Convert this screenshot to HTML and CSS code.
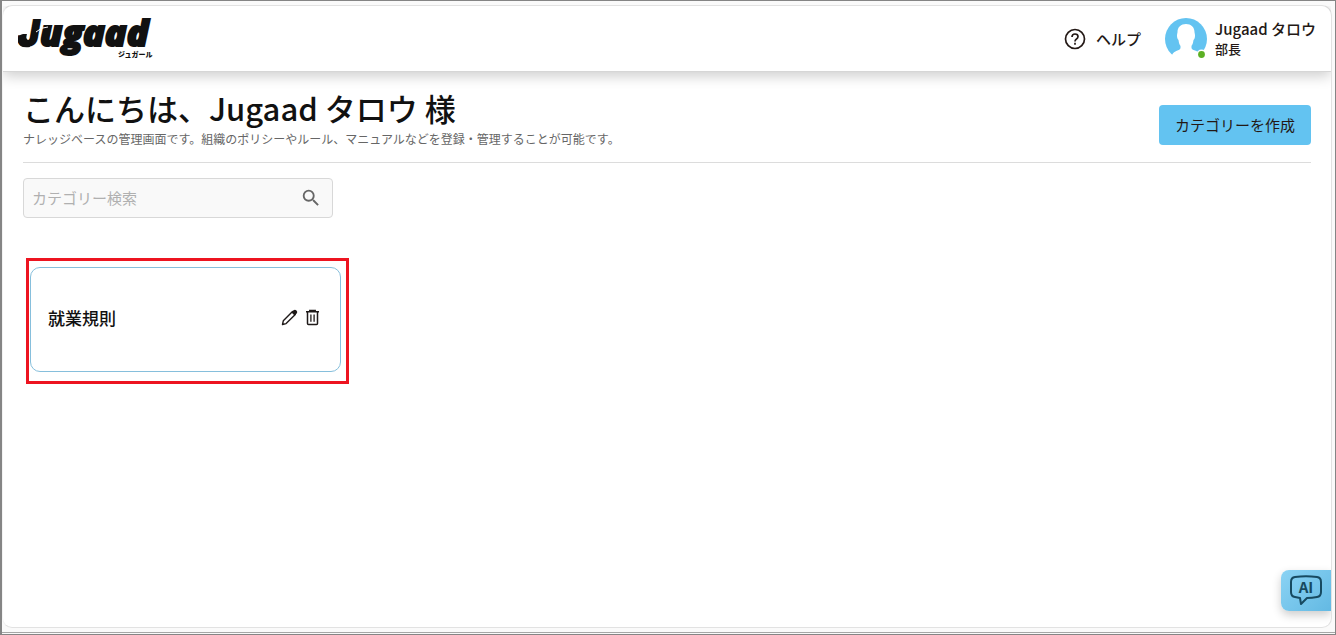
FILE: index.html
```html
<!DOCTYPE html>
<html lang="ja">
<head>
<meta charset="utf-8">
<meta name="viewport" content="width=device-width, initial-scale=1">
<title>Jugaad</title>
<link rel="stylesheet" href="styles.css">
</head>
<body>
<div class="app">
  <header class="topbar">
    <a class="brand" href="#" aria-label="Jugaad ジュガール">
      <svg class="brand-logo" width="140" height="56" viewBox="0 0 140 56">
        <text class="brand-word" x="0" y="35"><tspan class="brand-initial">J</tspan><tspan x="22">ugaad</tspan></text>
        <path d="M0 29Q0 24 5 23L9 23Q7 27 10 29L12 36Q1 38 0 29Z"/>
        <path d="M18 21Q23 16 30 16" fill="none" stroke="#fff" stroke-width="1"/>
        <text class="brand-kana" x="100" y="46">ジュガール</text>
      </svg>
    </a>
    <nav class="topbar-actions">
      <a class="help" href="#">
        <svg width="22" height="22" viewBox="0 0 22 22" fill="none" stroke="#231815" stroke-width="1.700">
          <circle cx="11" cy="11" r="9.500"/>
          <path d="M8 9Q8 6 11 6Q14 6 14 8.600Q14 10 12.500 11Q11 12 11 13.500"/>
          <path d="M11 14.800V16.800"/>
        </svg>
        <span>ヘルプ</span>
      </a>
      <a class="user" href="#">
        <svg width="42" height="42" viewBox="0 0 42 42">
          <circle cx="21" cy="21" r="21" fill="#63c3f1"/>
          <path d="M21 6C26 6 29.500 9 29.500 14C29.500 15 30 16 30 17.500C30 19.500 29.500 21 28.500 22C28 26 27 27 26.500 28V30C27 33 34 32 36 37L34 42H7L7 37C9 32 15 33 15.500 30V28C15 27 14 26 13.500 22C12.500 21 12 19.500 12 17.500C12 16 12.500 15 12.500 14C12.500 9 16 6 21 6Z" fill="#fff"/>
          <circle cx="36.500" cy="36.500" r="5" fill="#fff"/>
          <circle cx="36.500" cy="36.500" r="3.400" fill="#5cb024"/>
        </svg>
        <span class="user-text">
          <span class="user-name">Jugaad タロウ</span>
          <span class="user-role">部長</span>
        </span>
      </a>
    </nav>
  </header>
  <main class="content">
    <section class="intro">
      <div>
        <h1>こんにちは、Jugaad タロウ 様</h1>
        <p>ナレッジベースの管理画面です。組織のポリシーやルール、マニュアルなどを登録・管理することが可能です。</p>
      </div>
      <button class="create" type="button">カテゴリーを作成</button>
    </section>
    <form class="search">
      <input type="text" placeholder="カテゴリー検索" aria-label="カテゴリー検索">
      <button type="submit" aria-label="検索">
        <svg width="22" height="22" viewBox="0 0 24 24" fill="#666"><path d="M15.500 14h-.790l-.280-.270A6.470 6.470 0 0 0 16 9.500 6.500 6.500 0 1 0 9.500 16c1.610 0 3.090-.590 4.230-1.570l.270.280v.790l5 4.990L20.490 19zm-6 0C7.010 14 5 11.990 5 9.500S7.010 5 9.500 5 14 7.010 14 9.500 11.990 14 9.500 14"/></svg>
      </button>
    </form>
    <div class="highlight">
      <article class="card">
        <h2>就業規則</h2>
        <div class="card-actions">
          <button type="button" aria-label="編集">
            <svg width="17" height="17" viewBox="0 0 17 17" fill="none" stroke="#1f1a19" stroke-width="1.400" stroke-linejoin="round"><path d="M1.500 15.500L2.300 11.800L11.500 2.600L14.300 5.400L5.100 14.600Z"/><path d="M11.500 3.500L13 1.800Q14 1.200 15 2Q16 3 15.200 4L13.500 5.500Z" fill="#1f1a19"/></svg>
          </button>
          <button type="button" aria-label="削除">
            <svg width="15" height="17" viewBox="0 0 15 17" fill="none" stroke="#1f1a19" stroke-width="1.500"><path d="M1 2.800H14M4.800 2.500V1.500H10.200V2.500M2.500 3V14.500Q2.500 15.500 3.500 15.500H11.500Q12.500 15.500 12.500 14.500V3"/><path d="M5.900 5.500V12.800M9.100 5.500V12.800" stroke-width="1.300"/></svg>
          </button>
        </div>
      </article>
    </div>
  </main>
  <button class="assistant" type="button" aria-label="AI">
    <svg width="34" height="32" viewBox="0 0 34 32">
      <path d="M6 2Q17 .5 28 2Q32 2.500 32 7V17Q32 21.500 28 22Q23 23 18 23L12 29L11 23L6 22Q2 21.500 2 17V7Q2 2.500 6 2Z" fill="none" stroke="#174a61" stroke-width="2" stroke-linejoin="round"/>
      <text class="assistant-text" x="17" y="18" text-anchor="middle">AI</text>
    </svg>
  </button>
</div>
</body>
</html>
```
FILE: styles.css
```css
* { box-sizing: border-box; }

body {
  margin: 0;
  min-height: 100vh;
  display: flex;
  padding: 4px 3px 6px 0;
  border: 1px solid #858585;
  border-left-width: 2px;
  background: linear-gradient(#a6a6a6, #a6a6a6) 0 calc(100% - 2px) / 100% 1px no-repeat, #fafafa;
  font-family: "Noto Sans CJK JP", sans-serif;
  color: #231815;
}

a { color: inherit; text-decoration: none; }
button { font: inherit; color: inherit; cursor: pointer; }
svg { display: block; }

.app {
  position: relative;
  flex: 1;
  border: 1px solid #e2e2e2;
  border-left-color: #f3f3f3;
  border-radius: 10px;
  background: #fff;
}

.topbar {
  display: flex;
  align-items: center;
  justify-content: space-between;
  height: 66px;
  padding: 0 15px;
  border-bottom: 1px solid #d6d6d6;
  border-radius: 10px 10px 0 0;
  background: #fff;
  box-shadow: 0 4px 14px rgba(0, 0, 0, 0.2);
  clip-path: inset(0 0 -30px 0);
}

.brand-logo { fill: #111; }
.brand-word {
  font: italic 800 36px "Open Sans", sans-serif;
  stroke: #111;
  stroke-width: 2px;
}
.brand-initial { font-family: Inter, sans-serif; }
.brand-kana { font: 900 7px "Noto Sans CJK JP", sans-serif; }

.topbar-actions { display: flex; align-items: center; gap: 24px; }
.help { display: flex; align-items: center; gap: 10px; font-size: 15px; font-weight: 500; }
.user { display: flex; align-items: center; gap: 8px; }
.user-text { display: flex; flex-direction: column; font-weight: 500; line-height: 20px; }
.user-name { font-size: 15px; }
.user-role { font-size: 13px; }

.content { padding: 14px 20px 24px; }

.intro {
  display: flex;
  align-items: center;
  justify-content: space-between;
  padding-bottom: 14px;
  border-bottom: 1px solid #dcdcdc;
}
.intro h1 {
  margin: 0;
  font-size: 31px;
  font-weight: 500;
  line-height: 44px;
  color: #111;
}
.intro p { margin: 0; font-size: 12px; line-height: 18px; color: #666; }

.create {
  height: 40px;
  margin-top: 16px;
  padding: 0 16px 2px;
  border: 0;
  border-radius: 4px;
  background: #63c3f1;
  font-size: 15px;
}

.search {
  display: flex;
  align-items: center;
  width: 310px;
  height: 40px;
  margin-top: 15px;
  padding: 0 10px 0 8px;
  border: 1px solid #d8d8d8;
  border-radius: 4px;
  background: #f9f9f9;
}
.search input {
  flex: 1;
  min-width: 0;
  padding: 0 0 1px;
  border: 0;
  outline: 0;
  background: none;
  font: 15px "Noto Sans CJK JP", sans-serif;
}
.search input::placeholder { color: #b0b0b0; }
.search button { padding: 0; border: 0; background: none; }

.highlight {
  width: 323px;
  margin: 40px 0 0 3px;
  padding: 6px 5px 9px 1px;
  border: 3px solid #ed1420;
}
.card {
  display: flex;
  align-items: center;
  justify-content: space-between;
  height: 105px;
  padding: 0 20px 4px 17px;
  border: 1px solid #86bfdc;
  border-radius: 10px;
}
.card h2 { margin: 0; font-size: 17px; font-weight: 500; color: #111; }
.card-actions { display: flex; gap: 7px; }
.card-actions button { padding: 0; border: 0; background: none; }

.assistant {
  position: absolute;
  right: 0;
  bottom: 16px;
  padding: 5px 8px 4px;
  border: 0;
  border-radius: 8px 0 0 8px;
  background: linear-gradient(135deg, #8bd3f4, #63b9e3);
  box-shadow: 0 4px 10px rgba(0, 0, 0, 0.2);
  clip-path: inset(-20px 0 -20px -20px);
}
.assistant-text { font: 700 15px "Noto Sans CJK JP", sans-serif; fill: #174a61; }
```
